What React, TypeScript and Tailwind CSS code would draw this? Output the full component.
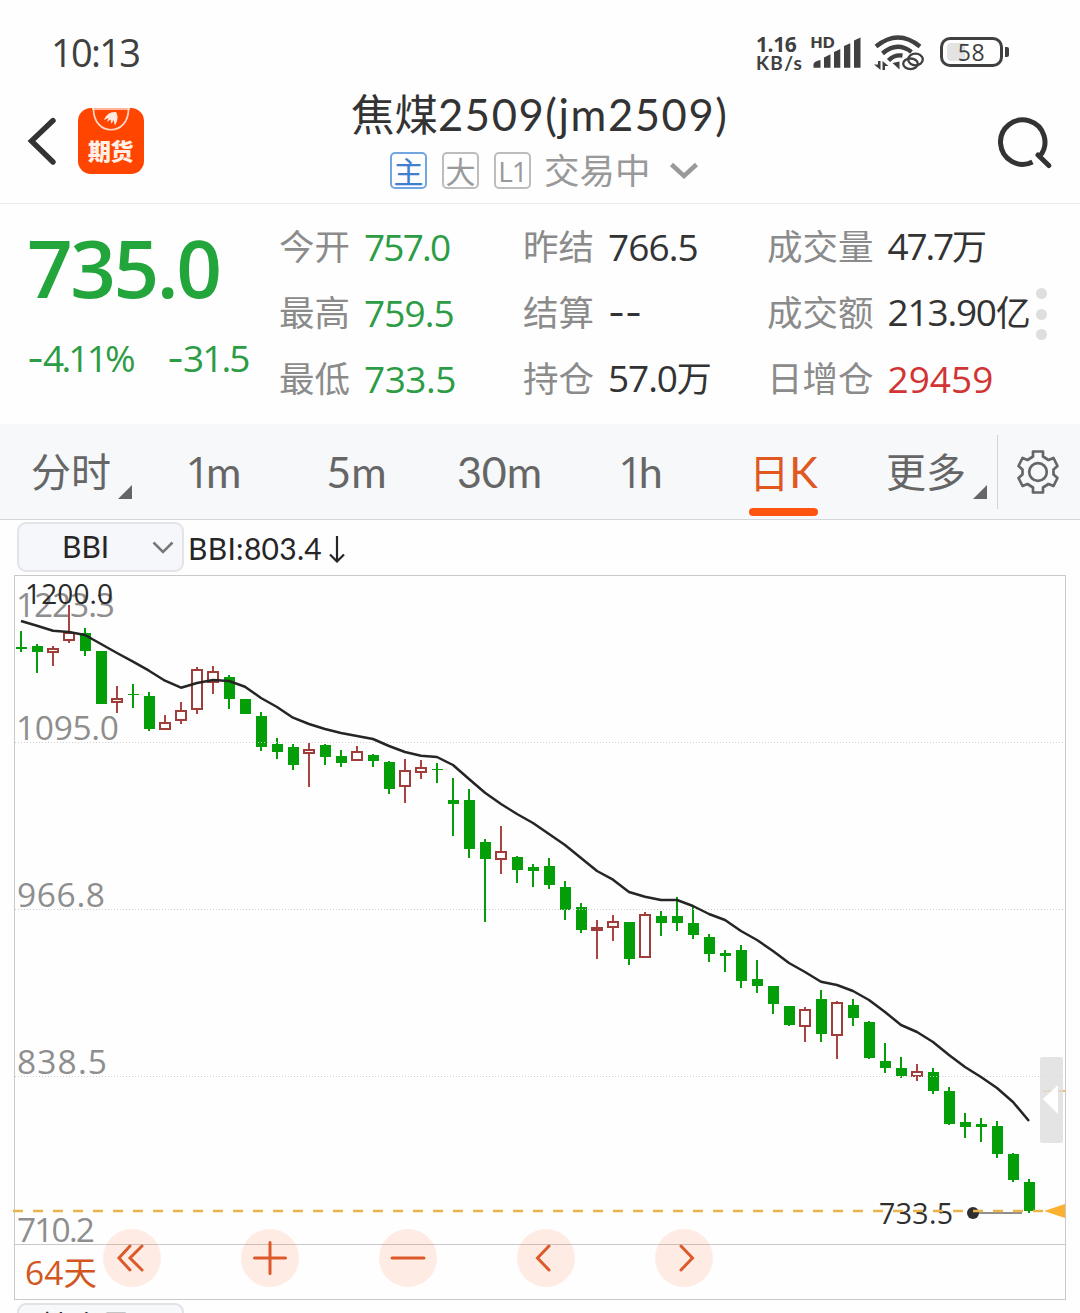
import React from "react";

type Candle = [hi: number, top: number, bottom: number, lo: number, up?: 1];

// Page-space y values of each daily candle: high, body top, body bottom, low.
const candles: Candle[] = [
  [631, 647, 649, 652], [644, 646, 652, 673], [646, 648, 653, 666, 1], [605, 632, 641, 643, 1],
  [628, 633, 651, 656], [651, 651, 704, 704], [686, 698, 703, 713, 1], [684, 694, 695, 708],
  [692, 696, 729, 731], [715, 722, 730, 730, 1], [702, 710, 721, 724, 1], [667, 669, 710, 714, 1],
  [666, 671, 683, 694, 1], [675, 677, 699, 709], [699, 699, 714, 714], [712, 716, 747, 751],
  [738, 744, 752, 759], [744, 747, 765, 770], [743, 749, 754, 787, 1], [744, 745, 757, 765],
  [750, 756, 763, 767], [746, 751, 761, 761, 1], [754, 755, 761, 767], [761, 762, 789, 794],
  [759, 770, 787, 803, 1], [760, 767, 773, 779, 1], [763, 769, 770, 783], [778, 800, 804, 836],
  [789, 800, 849, 858], [839, 842, 859, 922], [826, 851, 860, 874, 1], [856, 857, 870, 883],
  [864, 867, 871, 887], [858, 866, 885, 889], [881, 887, 910, 920], [903, 907, 930, 933],
  [920, 927, 931, 959, 1], [915, 921, 928, 941, 1], [922, 922, 959, 965], [912, 914, 958, 958, 1],
  [911, 916, 923, 936], [897, 916, 923, 931], [907, 923, 935, 939], [934, 937, 954, 962],
  [950, 953, 956, 972], [945, 950, 981, 988], [960, 979, 986, 993], [986, 986, 1004, 1014],
  [1006, 1006, 1025, 1026], [1007, 1009, 1027, 1042, 1], [990, 999, 1034, 1042], [1001, 1002, 1036, 1059, 1],
  [999, 1005, 1018, 1026], [1021, 1022, 1058, 1059], [1043, 1061, 1068, 1073], [1057, 1068, 1076, 1078],
  [1064, 1071, 1077, 1081, 1], [1068, 1072, 1091, 1094], [1087, 1091, 1124, 1125], [1113, 1122, 1127, 1138],
  [1118, 1124, 1127, 1142], [1121, 1126, 1154, 1158], [1153, 1154, 1180, 1182], [1179, 1182, 1211, 1213],
];

const bbi = [
  621, 625.7, 630.7, 632, 635, 644, 653, 661.7, 670.7, 680.7, 687.7, 683, 680, 681, 686.7, 698, 707, 717.7,
  724, 729, 733, 736, 739, 746, 752, 755.7, 757, 765, 779, 792.7, 804, 814, 823, 834, 845, 858, 871, 879.7,
  892, 896.7, 900, 900, 906, 914, 920, 931, 940, 951, 963, 972, 981.7, 985, 991, 1000, 1012, 1025, 1032,
  1042, 1055, 1067, 1077, 1088, 1102, 1121,
];

const cx = (i: number) => 21 + i * 16;

const numerals = "font-['Open_Sans','Noto_Sans_CJK_SC',sans-serif]";

function Label(p: { x: number; y: number; w: number; size: number; fill: string; children: string }) {
  return (
    <text x={p.x} y={p.y} fontSize={p.size} fill={p.fill} textLength={p.w} lengthAdjust="spacing">
      {p.children}
    </text>
  );
}

function Chart() {
  return (
    <svg width="1080" height="728" viewBox="0 574 1080 728" className={"block " + numerals}>
      <g fill="none" stroke="#c9c9c9">
        <rect x="14.5" y="575.5" width="1051" height="724" />
        <path d="M14 1244.5H1066" />
      </g>
      <Label x={16} y={617} w={99} size={33.5} fill="#8e8e8e">1223.3</Label>
      <Label x={16} y={740} w={103} size={33.5} fill="#8e8e8e">1095.0</Label>
      <Label x={17} y={907} w={88} size={33.5} fill="#8e8e8e">966.8</Label>
      <Label x={17} y={1074} w={90} size={33.5} fill="#8e8e8e">838.5</Label>
      <Label x={17} y={1242} w={78} size={33.5} fill="#8e8e8e">710.2</Label>
      {candles.map(([hi, top, bottom, lo, up], i) =>
        up ? (
          <g key={i} fill="#a94442">
            <rect x={cx(i) - 1} y={hi} width="2" height={Math.max(0, top - hi)} />
            <rect x={cx(i) - 1} y={bottom} width="2" height={Math.max(0, lo - bottom)} />
            <rect x={cx(i) - 5} y={top + 1} width="10" height={bottom - top - 2} fill="none" stroke="#a03c3a" strokeWidth="2" />
          </g>
        ) : (
          <g key={i} fill="#049f08">
            <rect x={cx(i) - 1} y={hi} width="2" height={lo - hi} />
            <rect x={cx(i) - 5} y={top} width="11" height={bottom - top} />
          </g>
        )
      )}
      <path d="M15 742.5H1065M15 909.5H1065M15 1076.5H1065" stroke="#cfcfcf" strokeDasharray="1 2" />
      <polyline
        points={bbi.map((y, i) => `${cx(i)},${y}`).join(" ")}
        fill="none" stroke="#252525" strokeWidth="2.5" strokeLinejoin="round"
      />
      <Label x={25} y={604} w={88} size={28} fill="#2a2a2a">1200.0</Label>
      <Label x={879} y={1224} w={74} size={28.5} fill="#2f2f2f">733.5</Label>
      <path d="M978 1213H1022" stroke="#8f8f8f" strokeWidth="2" />
      <circle cx="973" cy="1213" r="6" fill="#2f2f2f" />
      <path d="M13 1211H1046" stroke="#e9b44c" strokeWidth="2.4" strokeDasharray="10 10" />
      <path d="M1044 1211L1065 1204V1218Z" fill="#fbb030" />
      <path d="M1043 1091H1065" stroke="#f6b765" strokeWidth="2" />
      <rect x="1040" y="1057" width="23" height="86" rx="2" fill="#dedede" fillOpacity=".82" />
      <path d="M1043 1099L1058 1085V1114Z" fill="#fff" />
      <text x="25" y="1285" fontSize="33.5" fill="#d2571f" textLength="72">64天</text>
    </svg>
  );
}

const controls = ["M-2 -12L-13 0L-2 12M10 -12L-2 0L10 12", "M-15.500 0H15.500M0 -15.500V15.500", "M-16 0H16", "M3 -12L-8.500 0L3 12", "M-3 -12L8.500 0L-3 12"];

function Controls() {
  return (
    <div className="absolute left-[103px] top-[655px] flex gap-[80px]">
      {controls.map((d) => (
        <button key={d} className="h-[58px] w-[58px] rounded-full bg-[#ff5210]/11">
          <svg width="58" height="58" viewBox="-29 -29 58 58" fill="none" stroke="#dc5a2a" strokeWidth="3" strokeLinecap="round">
            <path d={d} />
          </svg>
        </button>
      ))}
    </div>
  );
}

function StatusIcons() {
  return (
    <div className="flex h-[36px] items-start text-[#404040]">
      <div className="w-[55px] font-bold">
        <div className={"h-[19px] text-[21px] leading-[20px] tracking-[-0.400px] " + numerals}>1.16</div>
        <div className="h-[20px] text-[19px] leading-[20px] tracking-[1.300px]">KB/s</div>
      </div>
      <svg width="54" height="36" viewBox="811 34 54 36" fill="#404040">
        <text x="810.5" y="48" fontSize="15.5" fontWeight="800" textLength="24">HD</text>
        <path d="M813.500 67.700V64Q814 61.500 820.500 60V67.700ZM824 67.700V57.500L830.500 54.300V67.700ZM834 67.700V52L840.300 49V67.700ZM844 67.700V46L850.300 43.300V67.700ZM854 67.700V40.500L860.500 37.500V67.700Z" />
      </svg>
      <svg width="66" height="38" viewBox="865 34 66 38" fill="none" stroke="#404040">
        <path d="M876 46.500Q898 28.500 920 46.500" strokeWidth="4.400" />
        <path d="M882.500 53.500Q897 41 911.500 52" strokeWidth="4.400" />
        <path d="M888.500 60.500Q894 54.500 902.500 55.500" strokeWidth="4.400" />
        <g fill="#404040" stroke="none">
          <path d="M878 61H880.500V70L874 64.500H878Z" />
          <path d="M882.500 70V61L888.500 66H885V70Z" />
          <path d="M892.500 63L899.500 61.500V69.500Z" />
        </g>
        <g strokeWidth="2.300">
          <ellipse cx="915.500" cy="59.500" rx="7.300" ry="5.800" />
          <ellipse cx="910.500" cy="63.800" rx="7.300" ry="5.300" />
        </g>
      </svg>
      <div className="relative ml-[9px] mt-[3px] flex h-[30px] w-[63px] items-center justify-center rounded-[10px] border-3 border-[#404040]">
        <span className="absolute left-[4px] top-[3px] h-[18px] w-[18px] rounded-l-[4px] bg-[#e3e3e3]" />
        <span className={"relative text-[23px] leading-[22px] tracking-[0.500px] " + numerals}>58</span>
        <span className="absolute left-[62px] top-[7px] h-[10px] w-[4px] rounded-r-[2px] bg-[#404040]" />
      </div>
    </div>
  );
}

function Header() {
  return (
    <header className="h-[204px] border-b border-[#ebebeb]">
      <div className="flex h-[90px] items-start justify-between pl-[51px] pr-[77px] pt-[34px]">
        <span className={"text-[38px] font-medium leading-[36px] tracking-[-1.700px] text-[#404040] " + numerals}>10:13</span>
        <StatusIcons />
      </div>
      <div className="flex h-[113px] items-start">
        <svg width="30" height="50" viewBox="27 116 30 50" fill="none" stroke="#333" strokeWidth="5.400" strokeLinecap="round" className="ml-[27px] mt-[26px]">
          <path d="M53 120.500L31.500 141L53 162" />
        </svg>
        <div className="relative ml-[21px] mt-[18px] h-[66px] w-[66px] overflow-hidden rounded-[13px] bg-[#ff4500]">
          <svg width="66" height="66" viewBox="0 0 66 66" className="absolute inset-0">
            <path d="M15.500 0C15 29 51 29 50.500 0M14 1H52" fill="none" stroke="#ffd9c8" strokeWidth="1.700" />
            <path d="M26 12C28 7 32 3.500 38 4C41 9 39 14 37 17.500L35.500 12L33.500 16L32.500 11.500L29 14L30.500 10Z" fill="#ffeae0" />
          </svg>
          <div className="absolute left-[10px] top-[29px] text-[23px] font-black leading-[28px] tracking-[-0.500px] text-[#fff0e8]">期货</div>
        </div>
        <div className="ml-[207px] w-[380px]">
          <h1 className="mt-[1px] h-[53px] whitespace-nowrap text-[43.500px] leading-[46px] text-[#333]">
            焦煤<span className="tracking-[1.600px]">2509(jm2509)</span>
          </h1>
          <div className="ml-[39px] mt-[8px] flex h-[37px] items-center gap-[15px] text-[30px] text-[#999]">
            <span className="flex h-[37px] w-[37px] items-center justify-center rounded-[5px] border-2 border-[#73a5e0] leading-[28px] text-[#3f7fd0]">主</span>
            <span className="flex h-[37px] w-[37px] items-center justify-center rounded-[5px] border-2 border-[#bdbdbd] leading-[28px]">大</span>
            <span className={"flex h-[37px] w-[37px] items-center justify-center rounded-[5px] border-2 border-[#bdbdbd] text-[28px] leading-[30px] tracking-[-1px] " + numerals}>L1</span>
            <span className="ml-[-2px] text-[35.500px] leading-[37px]">交易中</span>
            <svg width="28" height="18" viewBox="0 0 28 18" fill="none" stroke="#999" strokeWidth="4.500" className="ml-[4px]">
              <path d="M1.500 2.500L14 14L26.500 2.500" />
            </svg>
          </div>
        </div>
        <svg width="54" height="54" viewBox="998 115 54 54" fill="none" stroke="#333" strokeWidth="5" className="ml-[267px] mt-[25px]">
          <path d="M1032.500 162A22.200 22.200 0 1 1 1040 156" />
          <path d="M1038 155L1048.800 165.500" strokeLinecap="round" />
        </svg>
      </div>
    </header>
  );
}

const green = "text-[#2c9c45]";
const dark = "text-[#333]";
const stats: [label: string, value: string, cls: string, unit?: string][][] = [
  [["今开", "757.0", green + " tracking-[-1.800px]"], ["最高", "759.5", green + " tracking-[-0.900px]"], ["最低", "733.5", green + " tracking-[-0.500px]"]],
  [["昨结", "766.5", dark + " tracking-[-0.900px]"], ["结算", "--", dark + " font-['Inter']"], ["持仓", "57.0", dark + " tracking-[-1.100px]", "万"]],
  [["成交量", "47.7", dark + " tracking-[-2.200px]", "万"], ["成交额", "213.90", dark + " tracking-[-1.200px]", "亿"], ["日增仓", "29459", "text-[#d23434]"]],
];

function Quote() {
  return (
    <section className="flex h-[220px]">
      <div className={"w-[279px] pl-[27px] text-[#22a53a] " + numerals}>
        <div className="pt-[16px] text-[80px] font-semibold leading-[94px] tracking-[-2.500px]">735.0</div>
        <div className={"flex pt-[25px] text-[37px] leading-[38px] " + green}>
          <span className="w-[140px] tracking-[-2.800px]"><span className="font-['Inter'] tracking-[-1px]">-</span>4.11%</span>
          <span className="tracking-[-1.900px]"><span className="font-['Inter'] tracking-[-1px]">-</span>31.5</span>
        </div>
      </div>
      {stats.map((col, i) => (
        <div key={i} className="w-[244px] pt-[10px]">
          {col.map(([name, value, cls, unit]) => (
            <div key={name} className="flex h-[66px] items-center gap-[14px] whitespace-nowrap leading-[44px]">
              <span className="text-[35.500px] text-[#8b8b8b]">{name}</span>
              <span className={"mt-[-1px] text-[37px] " + (value === "--" ? "" : numerals + " ") + cls}>
                {value}
                {unit && <span className="text-[35px] tracking-normal">{unit}</span>}
              </span>
            </div>
          ))}
        </div>
      ))}
      <div className="ml-[25px] mt-[84px] flex flex-col gap-[9.500px]">
        <span className="h-[11px] w-[11px] rounded-full bg-[#dedede]" />
        <span className="h-[11px] w-[11px] rounded-full bg-[#dedede]" />
        <span className="h-[11px] w-[11px] rounded-full bg-[#dedede]" />
      </div>
    </section>
  );
}

function Corner() {
  return (
    <svg width="14" height="14" viewBox="0 0 14 14" fill="#666" className="mt-[40px]">
      <path d="M14 0V14H0Z" />
    </svg>
  );
}

function Tabs() {
  return (
    <nav className="flex h-[96px] border-b border-[#d4d6d9] bg-[#f6f8fa] text-[43px] leading-[96px] text-[#666]">
      <div className="flex w-[157px] items-center pl-[31px]">
        <span className="mr-[7px] text-[40px]">分时</span>
        <Corner />
      </div>
      <span className="w-[113px] text-center"><span className={"tracking-[-4px] " + numerals}>1</span>m</span>
      <span className="w-[173px] text-center">5m</span>
      <span className="w-[113px] text-center">30m</span>
      <span className="w-[169px] text-center"><span className={"tracking-[-4px] " + numerals}>1</span>h</span>
      <span className="relative ml-[24px] w-[69px] whitespace-nowrap text-center text-[#e0571f]">
        <span className="text-[40px]">日</span>K
        <span className="absolute bottom-[3px] left-0 h-[8px] w-[69px] rounded-full bg-[#ff5310]" />
      </span>
      <div className="ml-[68px] flex w-[111px] items-center">
        <span className="mr-[7px] text-[40px]">更多</span>
        <Corner />
      </div>
      <span className="mt-[11px] h-[74px] w-px bg-[#d2d4d7]" />
      <svg width="44" height="46" viewBox="-22 -23 44 46" fill="none" stroke="#666" strokeWidth="2.700" strokeLinejoin="round" className="ml-[18px] mt-[25px]">
        <path d="M-5 -20.500H5V-15.500L10.500 -12L15.500 -14L19.500 -6L15.500 -2.500V2.500L19.500 6L15.500 14L10.500 12L5 15.500V20.500H-5V15.500L-10.500 12L-15.500 14L-19.500 6L-15.500 2.500V-2.500L-19.500 -6L-15.500 -14L-10.500 -12L-5 -15.500Z" />
        <circle r="8.800" />
      </svg>
    </nav>
  );
}

function Chevron() {
  return (
    <svg width="22" height="14" viewBox="0 0 22 14" fill="none" stroke="#777" strokeWidth="2.500" className="absolute right-[8px] top-[17px]">
      <path d="M1.500 1.500L11 11L20.500 1.500" />
    </svg>
  );
}

export default function App() {
  return (
    <main className="h-[1313px] w-[1080px] overflow-hidden bg-[#fefefe] font-['Lato','Noto_Sans_CJK_SC',sans-serif]">
      <Header />
      <Quote />
      <Tabs />
      <div className="flex h-[54px] pl-[17px] pt-[2px] text-[30px] text-[#262626]">
        <div className="relative h-[50px] w-[167px] rounded-[9px] border-2 border-[#e2e4e9] bg-[#f6f7fa] pl-[43px] leading-[45px]">
          BBI
          <Chevron />
        </div>
        <span className="ml-[4px] leading-[52px] tracking-[0.300px]">BBI:803.4</span>
        <svg width="18" height="28" viewBox="0 0 18 28" fill="none" stroke="#262626" strokeWidth="2.200" className="ml-[6px] mt-[13px]">
          <path d="M9 1V26M2 19.500L9 26.500L16 19.500" />
        </svg>
      </div>
      <div className="relative mb-[1px] h-[728px]">
        <Chart />
        <Controls />
      </div>
      <div className="ml-[17px] h-[50px] w-[167px] rounded-[9px] border-2 border-[#dfe2e7] bg-[#f6f8fa] pl-[22px] text-[30px] leading-[41px] text-[#262626]">持仓量</div>
    </main>
  );
}
